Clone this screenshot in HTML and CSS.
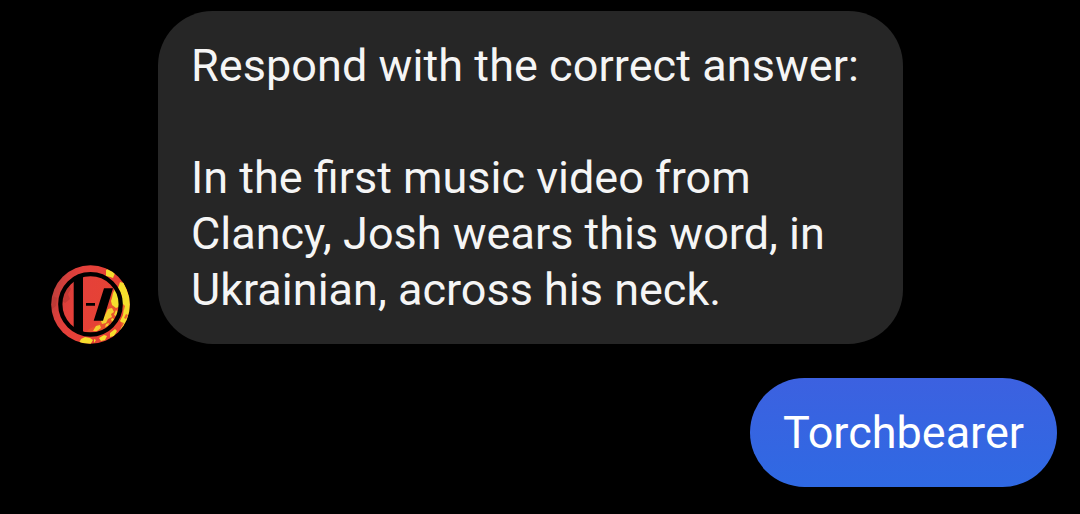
FILE: index.html
```html
<!DOCTYPE html>
<html lang="en">
<head>
    <meta charset="UTF-8">
    <meta name="viewport" content="width=device-width, initial-scale=1.0">
    <title>Chat</title>
    <link rel="stylesheet" href="styles.css">
</head>
<body>
    <div class="chat">
        <div class="row received">
            <svg class="avatar" viewBox="6 5 79 79">
                <defs>
                    <clipPath id="disc"><circle cx="45.5" cy="44.5" r="39.3"/></clipPath>
                    <linearGradient id="red" x1="0" y1="0" x2="1" y2="0.3">
                        <stop offset="0" stop-color="#a8403d"/>
                        <stop offset="0.25" stop-color="#d93f3b"/>
                        <stop offset="0.4" stop-color="#e5403a"/>
                        <stop offset="1" stop-color="#e64432"/>
                    </linearGradient>
                </defs>
                <g clip-path="url(#disc)">
                    <rect x="6" y="5" width="79" height="79" fill="url(#red)"/>
                    <!-- worn patches -->
                    <path d="M18 30l5-6 3 5-3 5 2 5-5 4-4-3zM8 36l4 2-1 8-4 3z" fill="#b53631" opacity="0.6"/>
                    <!-- top and right edge -->
                    <path d="M61 10l4-2 5 5-2 5-3-1-4-1z" fill="#f6de2d"/>
                    <path d="M75 22l4 1 8 20-2 16-6 10-4 1 3-6-3-3 3-6 1-8-3-4 1-7-4-8z" fill="#f6de2d"/>
                    <!-- inside the ring -->
                    <path d="M67 32l4-5 5 9 1 10-4 12-9 9-12 5-12 2 4-5 7-3 6-6 3-7 4-5z" fill="#e9532d"/>
                    <path d="M68 33l2-4 5 8 1 9-5 2-4-3-1-4 1-3z" fill="#f6de2d"/>
                    <path d="M63 49l4-1 2 4-3 2 1 3-4 2-2 4-4 1-1-3 3-4zM71 50l2 2-2 4-2-1zM51 66l4-1 1 3-4 3-4 0zM61 64l3-1-1 3-3 1zM66 59l2-1 1 2-2 2z" fill="#f4cf2e"/>
                    <!-- bottom edge -->
                    <path d="M36 79l4-2 5 1 3 2-3 5-12 0zM54 78l5-3 3 1-2 4-4 1zM65 73l5-4 2 2-3 5-4 1zM49 79l2 1-2 3z" fill="#f6de2d"/>
                    <path d="M78 44l2 2-1 4-2-1zM81 54l2 1-2 4-2-1zM76 62l3 1-2 4z" fill="#e9632c"/>
                </g>
                <circle cx="45.5" cy="44.3" r="30.2" fill="none" stroke="#000" stroke-width="4.3"/>
                <path d="M28.7 17L38 14v61l-9.3-4zM41 43h9v2.8h-9zM59 28.3h9L58 60.7h-9.3z"/>
            </svg>
            <div class="bubble">Respond with the correct answer:<br><br>In the first music video from<br>Clancy, Josh wears this word, in<br>Ukrainian, across his neck.</div>
        </div>
        <div class="row sent">
            <div class="bubble">Torchbearer</div>
        </div>
    </div>
</body>
</html>
```

FILE: styles.css
```css
body {
    margin: 0;
    background: #000;
    font-family: Roboto, sans-serif;
    overflow: hidden;
}
.chat {
    display: flex;
    flex-direction: column;
    gap: 34px;
    padding: 11px 23px 27px 51px;
}
.row {
    display: flex;
    align-items: flex-end;
}
.received {
    gap: 28px;
}
.sent {
    justify-content: flex-end;
}
.avatar {
    width: 79px;
    height: 79px;
    flex: none;
}
.bubble {
    box-sizing: border-box;
    padding: 26.5px 33px;
    border-radius: 54.5px;
    font-size: 45px;
    line-height: 56px;
    white-space: nowrap;
}
.received .bubble {
    width: 745px;
    background: #262626;
    color: #f5f5f5;
}
.received .bubble::first-line {
    letter-spacing: 0.06px;
}
.sent .bubble {
    width: 307px;
    background: linear-gradient(#3c61e0, #2f69e3);
    color: #fff;
}
```
